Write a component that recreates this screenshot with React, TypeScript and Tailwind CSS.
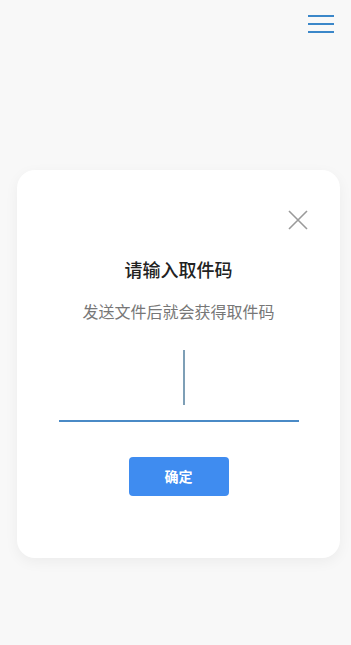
import { useState } from "react"

export default function App() {
  const [code, setCode] = useState("")

  return (
    <div
      className="min-h-[645px] w-full bg-[#f8f8f8] pt-[15px]"
      style={{ fontFamily: '"Noto Sans", "Noto Sans CJK SC", sans-serif' }}
    >
      <div className="flex justify-end pr-[17px]">
        <button className="flex w-[26px] flex-col gap-[6px]">
          <span className="h-[2px] w-full bg-[#3b87c9]" />
          <span className="h-[2px] w-full bg-[#3b87c9]" />
          <span className="h-[2px] w-full bg-[#3b87c9]" />
        </button>
      </div>

      <div className="ml-[17px] mt-[137px] w-[323px] rounded-[18px] bg-white pb-[62px] shadow-[0_4px_14px_rgba(0,0,0,0.05)]">
        <div className="flex justify-end pr-[32px] pt-[40px]">
          <svg width="20" height="20" viewBox="0 0 20 20" className="text-[#9a9a9a]">
            <path d="M1 1L19 19M19 1L1 19" stroke="currentColor" strokeWidth="1.6" />
          </svg>
        </div>

        <div className="mt-[28px] text-center text-[18px] leading-[24px] font-medium text-[#222]">
          请输入取件码
        </div>
        <div className="mt-[19px] text-center text-[16px] leading-[22px] text-[#777]">
          发送文件后就会获得取件码
        </div>

        <div className="mx-auto mt-[27px] flex w-[240px] flex-col items-center">
          <div className="relative h-[55px] w-full">
            <input
              value={code}
              onChange={(e) => setCode(e.target.value)}
              className="h-full w-full bg-transparent text-center text-[28px] outline-none caret-transparent"
            />
            {code === "" && (
              <span className="pointer-events-none absolute left-[124px] top-0 h-[55px] w-[2px] bg-[#7e9fb6]" />
            )}
          </div>
          <div className="mt-[15px] h-[2px] w-full bg-[#4a8ac6]" />
        </div>

        <div className="mt-[35px] flex justify-center">
          <button className="h-[39px] w-[100px] rounded-[4px] bg-[#3f8cf0] text-[14px] font-bold text-white">
            确定
          </button>
        </div>
      </div>
    </div>
  )
}
